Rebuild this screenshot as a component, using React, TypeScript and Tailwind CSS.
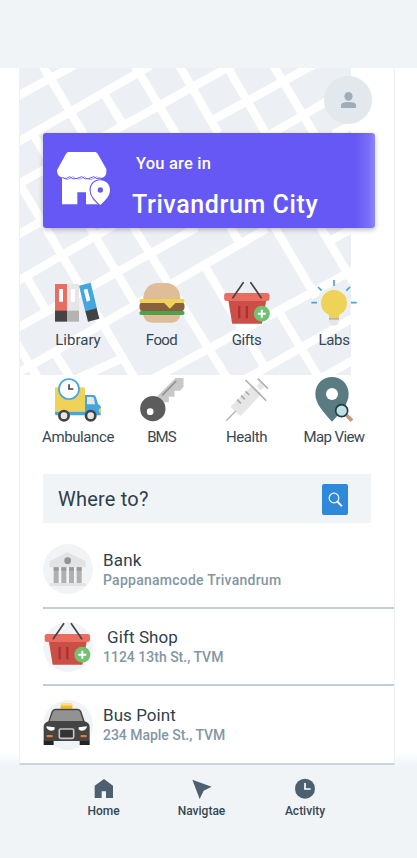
import React from "react";

const streets = [
  "M50 290L235 189", "M50 428L450 198", "M50 555L700 193", "M50 706L150 650", "M641 358L945 192",
  "M50 845L1060 258", "M50 985L590 683", "M50 1121L800 686", "M235 1134L360 1078",
  "M460 1136L1060 810", "M740 1136L1060 953", "M960 1136L1060 1080", "M995 720L1060 683", "M1000 402L1060 374",
  "M124 190L252 405", "M314 285L372 378", "M400 190L530 405", "M534 190L655 400",
  "M676 190L800 405", "M816 190L945 405", "M98 400L140 470", "M55 545L405 1136", "M78 828L138 930",
  "M50 1030L115 1136", "M165 1060L213 1136", "M268 680L412 922", "M400 680L682 1136",
  "M690 680L718 726", "M615 800L792 1098", "M823 680L948 892", "M840 940L958 1136", "M960 680L1060 848",
];

function CityMap() {
  return (
    <svg className="absolute left-0 top-0 h-[307px] w-[331px]" viewBox="60 204 993 921" preserveAspectRatio="none">
      <rect x="57" y="204" width="996" height="921" fill="#ecf0f5" />
      <g stroke="#fff" strokeWidth="25" fill="none">
        {streets.map((d) => <path key={d} d={d} />)}
      </g>
    </svg>
  );
}

function Icon({ box, children }: { box: string; children: React.ReactNode }) {
  return <svg className="h-[50px] w-12" viewBox={box}>{children}</svg>;
}

function Basket() {
  return (
    <>
      <path d="M62 208H177L163 281H74Z" fill="#c94f47" />
      <path d="M95 228V265M118 228V265" stroke="#b02f35" strokeWidth="7" />
      <rect x="50" y="189" width="136" height="24" rx="7" fill="#e96d60" />
      <path d="M76 203L107 158M161 203L130 158" stroke="#444" strokeWidth="5" fill="none" strokeLinecap="round" />
      <circle cx="163" cy="251" r="24" fill="#71c173" />
      <path d="M151 251H175M163 239V263" stroke="#fff" strokeWidth="6" />
    </>
  );
}

const services = [
  {
    label: "Library", text: "tracking-[0px]", icon: (
      <Icon box="162 144 144 150">
        <path d="M165 162H201V243H165Z" fill="#e96d60" /><path d="M201 162H237V243H201Z" fill="#e6e6e6" />
        <path d="M165 242H201V275H165Z" fill="#444" /><path d="M201 242H237V275H201Z" fill="#b3b3b3" />
        <path d="M177 177H189V215H177ZM213 177H225V215H213Z" fill="#fff" />
        <path d="M237 167L272 158L291 236L256 245Z" fill="#43a6dd" /><path d="M256 244L290 235L298 266L264 275Z" fill="#444" />
        <path d="M251 179L262 176L271 211L260 215Z" fill="#fff" />
      </Icon>
    ),
  },
  {
    label: "Food", text: "tracking-[-0.6px]", icon: (
      <Icon box="412.5 144 144 150">
        <path d="M428 210C428 178 446 159 473 159H496C522 159 540 178 540 210Z" fill="#dfbd99" />
        <path d="M428 252H540C538 269 528 278 512 278H456C440 278 430 269 428 252Z" fill="#dfbd99" />
        <rect x="417" y="216" width="135" height="28" rx="12" fill="#88603e" />
        <path d="M420 207H549Q552 207 552 213Q552 219 549 219H525L508 236L491 219H420Q417 219 417 213Q417 207 420 207Z" fill="#efd358" />
        <rect x="417" y="243" width="135" height="12" rx="5" fill="#4ea24c" />
      </Icon>
    ),
  },
  { label: "Gifts", text: "tracking-[-0.4px]", icon: <Icon box="46.5 144 144 150"><Basket /></Icon> },
  {
    label: "Labs", text: "tracking-[-0.3px]", icon: (
      <Icon box="309 144 144 150">
        <path d="M381 150V168M333 171L344 182M429 171L418 182M313 218H330M432 218H449" stroke="#43a6dd" strokeWidth="5" />
        <path d="M366 263H396V270Q396 287 381 287Q366 287 366 270Z" fill="#e6e6e6" /><path d="M366 263H396V269H366Z" fill="#b3b3b3" />
        <path d="M342 219A39 39 0 1 1 420 219C420 239 409 248 396 255V264H366V255C353 248 342 239 342 219Z" fill="#efd358" />
      </Icon>
    ),
  },
  {
    label: "Ambulance", text: "tracking-[-0.4px]", icon: (
      <Icon box="72 30 144 150">
        <path d="M75 139H164V90H190Q196 90 198 97L204 117L212 123V151H78Q75 151 75 145Z" fill="#43a6dd" />
        <path d="M75 67H160Q165 67 165 72V140H75Z" fill="#efd358" />
        <path d="M171 96H187Q191 96 192 101L195 118H171Z" fill="#e6e6e6" />
        <path d="M213 130V144Q206 144 206 137Q206 130 213 130Z" fill="#efd358" />
        <circle cx="117" cy="72" r="30" fill="#fff" stroke="#43a6dd" strokeWidth="5" />
        <path d="M117 58V72H130" stroke="#444" strokeWidth="5" fill="none" />
        <circle cx="102" cy="152" r="14" fill="#e6e6e6" stroke="#444" strokeWidth="8" />
        <circle cx="182" cy="152" r="14" fill="#e6e6e6" stroke="#444" strokeWidth="8" />
      </Icon>
    ),
  },
  {
    label: "BMS", text: "tracking-[-0.9px]", icon: (
      <Icon box="322.5 30 144 150">
        <path d="M378 96L435 39H459V66L449 77H432V95H415V112H398L388 120Z" fill="#c8c8c8" />
        <path d="M395 91L437 48" stroke="#929292" strokeWidth="5" />
        <circle cx="367" cy="131" r="38" fill="#5c5c5c" /><circle cx="359" cy="140" r="10" fill="#fff" />
      </Icon>
    ),
  },
  {
    label: "Health", text: "tracking-[-0.4px]", icon: (
      <Icon box="37.5 30 144 150">
        <path d="M61 124L126 60L153 87L91 152Q79 146 76 140Q66 137 61 124Z" fill="#e6e6e6" />
        <path d="M138 63L149 51L162 65L151 76Z" fill="#e6e6e6" />
        <path d="M47 167L76 138" stroke="#b3b3b3" strokeWidth="4" />
        <path d="M105 45L167 107M142 41L172 71" stroke="#b3b3b3" strokeWidth="5" />
        <path d="M80 104L91 115M92 92L103 103M105 79L116 90" stroke="#aaa" strokeWidth="5" />
      </Icon>
    ),
  },
  {
    label: "Map View", text: "tracking-[-0.6px]", icon: (
      <Icon box="300 30 144 150">
        <path d="M366 36C394 36 416 58 416 87C416 115 395 139 366 170C338 139 316 115 316 87C316 58 338 36 366 36Z" fill="#5b7b83" />
        <circle cx="366" cy="87" r="18" fill="#fff" />
        <path d="M409 150L426 167" stroke="#c79b7d" strokeWidth="11" />
        <circle cx="395" cy="137" r="18" fill="#bfe1df" stroke="#223b49" strokeWidth="5" />
      </Icon>
    ),
  },
];

// Place icons are drawn on a grid of three units per pixel, inside a 50px disc.
const places = [
  {
    name: "Bank", address: "Pappanamcode Trivandrum", nameText: "tracking-[0.2px]", addressText: "tracking-[0.25px]",
    icon: (
      <svg className="size-[50px]" viewBox="40 42 150 150">
        <path d="M60 94L114 67L168 94V112H60Z" fill="#e3e3e3" /><path d="M60 159H168V168H60Z" fill="#e3e3e3" />
        <path d="M72 112H87V159H72ZM95 112H110V159H95ZM118 112H133V159H118ZM141 112H156V159H141Z" fill="#b0b0b0" />
        <path d="M72 112H87V122H72ZM95 112H110V122H95ZM118 112H133V122H118ZM141 112H156V122H141Z" fill="#999" />
        <circle cx="114" cy="92" r="10" fill="#929292" />
      </svg>
    ),
  },
  {
    name: "Gift Shop", address: "1124 13th St., TVM", nameText: "pl-1 tracking-[0.1px]", addressText: "tracking-[0px]",
    icon: <svg className="size-[50px]" viewBox="45 153 150 150"><Basket /></svg>,
  },
  {
    name: "Bus Point", address: "234 Maple St., TVM", nameText: "tracking-[0.05px]", addressText: "tracking-[-0.03px]",
    icon: (
      <svg className="size-[50px]" viewBox="25 27 150 150">
        <path d="M78 52V40Q78 36 82 36H109Q113 36 113 40V52Z" fill="#ffdc7c" /><path d="M78 44H113V53H78Z" fill="#f3bb22" />
        <path d="M27 148H57V162H27ZM135 148H165V162H135Z" fill="#242424" />
        <path d="M41 91L51 61Q54 53 62 53H129Q137 53 140 61L150 91Q165 96 165 108V150H27V108Q27 96 41 91Z" fill="#444" />
        <path d="M45 90L55 63Q57 58 62 58H129Q134 58 136 63L145 90Z" fill="#929292" />
        <path d="M35 106L60 109V115Q58 119 50 119Q36 118 35 106ZM157 106L132 109V115Q134 119 142 119Q156 118 157 106Z" fill="#fff" />
        <path d="M36 132H54V139H36ZM138 132H156V139H138Z" fill="#e77a31" />
        <rect x="74" y="114" width="43" height="28" rx="4" fill="#333" stroke="#c5c5c5" strokeWidth="5" />
      </svg>
    ),
  },
];

const font = "font-['Roboto','Liberation_Sans',sans-serif]";

export default function App() {
  return (
    <div className={`flex h-[858px] w-[417px] flex-col overflow-hidden bg-[#f0f4f7] text-[#364754] ${font}`}>
      <div className="h-[68px] shrink-0" />
      <div className="flex h-[698px] shrink-0 bg-[linear-gradient(#fff_0,#fff_684px,#f0f4f7_698px)] pl-[19px]">
        <main className="relative flex h-[697px] w-[376px] flex-col border-x border-b-2 border-x-[#eef1f3] border-b-[#c9d6e2] bg-white">
          <CityMap />
          <div className="relative mt-2 mr-[22px] flex size-12 items-center justify-center self-end rounded-full bg-[#e2e8ec]">
            <svg className="h-4 w-[15px]" viewBox="401 126 44 48" preserveAspectRatio="none">
              <ellipse cx="423" cy="139" rx="12" ry="13" fill="#9caebc" />
              <path d="M401 174V165Q401 156 423 156Q445 156 445 165V174Z" fill="#9caebc" />
            </svg>
          </div>
          <section className="relative mt-[9px] ml-[23px] flex h-[95px] w-[332px] rounded-[3px] bg-[linear-gradient(90deg,#6558f5_0,#6558f5_312px,#7a6ff7_326px,#8f87f9_332px)] text-white shadow-[0_2px_5px_rgba(0,0,0,0.25)]">
            <svg className="mt-[18px] ml-[13px] h-[55px] w-[55px]" viewBox="168 303 165 165">
              <path d="M186 370H303V463H258V427H232V463H186Z" fill="#fff" />
              <path d="M204 306H287L292 310L319 357V366C319 382 303 389 290 379C278 390 264 390 254 379C242 389 230 389 219 379C208 389 197 389 190 383C178 382 171 374 171 361L199 310Z" fill="#fff" stroke="#6558f5" strokeWidth="3" paintOrder="stroke" />
              <path d="M188 383Q198 390 209 380Q219 390 228 386Q238 383 245 380Q256 390 266 386L281 380Q290 390 303 384" fill="none" stroke="#6558f5" strokeWidth="3" />
              <path d="M301 391C318 391 330 404 330 420C330 438 316 451 301 465C286 451 272 438 272 420C272 404 284 391 301 391Z" fill="#fff" stroke="#6558f5" strokeWidth="7" paintOrder="stroke" />
              <circle cx="301" cy="420" r="8" fill="#6558f5" />
            </svg>
            <div className="ml-[21px] flex flex-col whitespace-nowrap pt-5">
              <span className="ml-1 text-[16.5px] leading-[21px] font-medium tracking-[0.2px]">You are in</span>
              <span className="mt-4 text-[25px] leading-[30px] font-medium tracking-[0.6px]">Trivandrum City</span>
            </div>
          </section>
          <section className="relative mt-[50px] ml-4 grid grid-cols-[84px_83px_87px_88px] gap-y-[22px]">
            {services.map((s) => (
              <div key={s.label} className="flex h-[75px] flex-col items-center">
                {s.icon}
                <span className={`text-[15px] leading-[25px] whitespace-nowrap ${s.text}`}>{s.label}</span>
              </div>
            ))}
          </section>
          <section className="mt-6 ml-[23px] flex h-[49px] w-[328px] items-center justify-between bg-[#f0f4f7] pt-px pr-[23px] pl-[15px]">
            <span className="text-[20px] leading-6 tracking-[0.2px] text-[#2f3f4c]">Where to?</span>
            <button className="flex h-[31px] w-[26px] items-center justify-center rounded-[2px] bg-[#2e89da]" aria-label="Search">
              <svg className="h-[15px] w-[15px]" viewBox="981 108 45 45">
                <circle cx="999" cy="126" r="14.5" fill="none" stroke="#fff" strokeWidth="3.5" />
                <path d="M1009 137L1021 149" stroke="#fff" strokeWidth="6" strokeLinecap="round" />
              </svg>
            </button>
          </section>
          <ul className="mt-2 ml-[23px] flex flex-col">
            {places.map((p) => (
              <li key={p.name} className="flex h-[77px] items-center gap-[10px] border-b-2 border-[#bfced9] first:h-[78px] last:border-b-0">
                <div className="size-[50px] rounded-full bg-[#f0f4f7]">{p.icon}</div>
                <div className="flex flex-col pt-px whitespace-nowrap">
                  <span className={`text-[17px] leading-5 text-[#2f3f4c] ${p.nameText}`}>{p.name}</span>
                  <span className={`text-[14px] leading-5 font-medium text-[#8496a4] ${p.addressText}`}>{p.address}</span>
                </div>
              </li>
            ))}
          </ul>
        </main>
      </div>
      <nav className="grid grid-cols-[97px_99px_108px] pt-3 pl-[55px] text-[12px] font-medium">
        <a className="flex flex-col items-center gap-[3px]">
          <svg className="h-[22px] w-5" viewBox="281 264 60 66"><path d="M311 267L338 287V324H317V304H304V324H283V287Z" fill="#4d6070" /></svg>
          <span className="leading-4">Home</span>
        </a>
        <a className="flex flex-col items-center gap-[3px]">
          <svg className="h-[22px] w-5" viewBox="577 264 60 66"><path d="M578 269L636 290L612 302L600 327Z" fill="#4d6070" /></svg>
          <span className="leading-4">Navigtae</span>
        </a>
        <a className="flex flex-col items-center gap-[3px]">
          <svg className="h-[22px] w-5" viewBox="885 264 60 66"><circle cx="915" cy="296" r="30" fill="#4d6070" /><path d="M915 279V297H932" fill="none" stroke="#fff" strokeWidth="5" /></svg>
          <span className="leading-4">Activity</span>
        </a>
      </nav>
    </div>
  );
}
